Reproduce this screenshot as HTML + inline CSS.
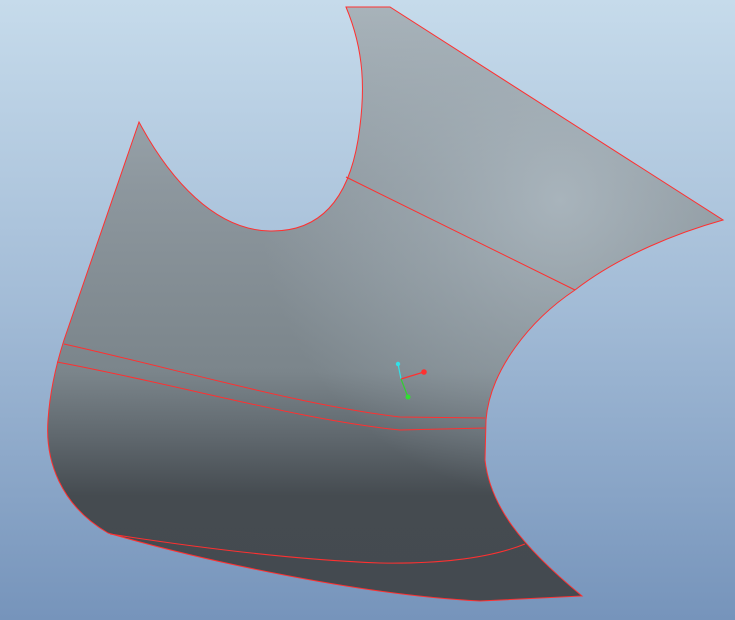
<!DOCTYPE html>
<html><head><style>html,body{margin:0;padding:0;width:735px;height:620px;overflow:hidden}</style></head>
<body>
<svg width="735" height="620" viewBox="0 0 735 620" xmlns="http://www.w3.org/2000/svg">
<defs>
<linearGradient id="bg" x1="0" y1="0" x2="0" y2="1">
<stop offset="0" stop-color="#c6dbeb"/>
<stop offset="0.5" stop-color="#a2bbd6"/>
<stop offset="1" stop-color="#7694bb"/>
</linearGradient>
<linearGradient id="sf" x1="0" y1="0" x2="0" y2="620" gradientUnits="userSpaceOnUse">
<stop offset="0" stop-color="#a9b4bb"/>
<stop offset="0.3" stop-color="#8d979e"/>
<stop offset="0.6" stop-color="#7b858b"/>
<stop offset="0.71" stop-color="#5e666c"/>
<stop offset="0.8" stop-color="#454b50"/>
<stop offset="1" stop-color="#444a50"/>
</linearGradient>
<radialGradient id="hl" cx="560" cy="200" r="300" gradientUnits="userSpaceOnUse">
<stop offset="0" stop-color="#adb9c1" stop-opacity="0.85"/>
<stop offset="0.5" stop-color="#a5b1b9" stop-opacity="0.45"/>
<stop offset="1" stop-color="#a5b1b9" stop-opacity="0"/>
</radialGradient>
</defs>
<rect width="735" height="620" fill="url(#bg)"/>
<path d="M346,7 L390,7 L723,220 C680,232 620,255 575,290 C530,320 490,370 486,420 L485,460 C490,505 520,545 582,596 L480,601 C360,595 200,560 108,533 C60,505 45,460 48,420 C50,390 56,365 64,340 L139,122 C170,180 215,230 270,231 C320,232 348,200 358,140 C366,90 364,50 346,7 Z" fill="url(#sf)"/>
<path d="M346,7 L390,7 L723,220 C680,232 620,255 575,290 C530,320 490,370 486,420 L485,460 C490,505 520,545 582,596 L480,601 C360,595 200,560 108,533 C60,505 45,460 48,420 C50,390 56,365 64,340 L139,122 C170,180 215,230 270,231 C320,232 348,200 358,140 C366,90 364,50 346,7 Z" fill="url(#hl)"/>
<g fill="none" stroke="#ff3030" stroke-width="1">
<path d="M346,7 L390,7 L723,220 C680,232 620,255 575,290 C530,320 490,370 486,420 L485,460 C490,505 520,545 582,596 L480,601 C360,595 200,560 108,533 C60,505 45,460 48,420 C50,390 56,365 64,340 L139,122 C170,180 215,230 270,231 C320,232 348,200 358,140 C366,90 364,50 346,7 Z"/>
<path d="M346,177 L575,290"/>
<path d="M64,344 C180,370 300,405 400,417 L485,418"/>
<path d="M57,362 C180,385 300,420 400,430 L485,428"/>
<path d="M110,534 C200,548 300,560 380,563 C440,564 490,558 525,544"/>
</g>
<line x1="401" y1="379" x2="398" y2="364" stroke="#30e0e8" stroke-width="1.2"/>
<line x1="401" y1="379" x2="424" y2="372" stroke="#ff3030" stroke-width="1.2"/>
<line x1="401" y1="379" x2="408" y2="397" stroke="#30d030" stroke-width="1.2"/>
<circle cx="398" cy="364" r="2.2" fill="#30e0e8"/>
<circle cx="424" cy="372" r="2.8" fill="#ff3030"/>
<circle cx="408" cy="397" r="2.5" fill="#30e030"/>
</svg>
</body></html>
